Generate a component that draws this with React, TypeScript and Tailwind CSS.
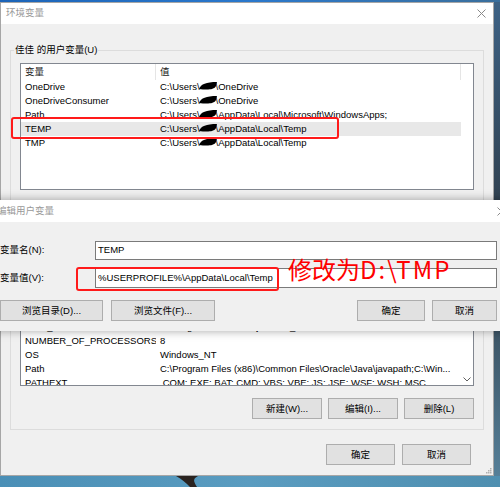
import React from "react";

type Row = { name: string; value: React.ReactNode; selected?: boolean };

function Blob() {
  return (
    <svg width="20" height="10" viewBox="0 0 20 10" className="inline-block -mx-[2px] align-[-1px]">
      <path d="M1 8 C3 3 8 1 19 1 L18 5 C16 9 9 9 1 8 Z" fill="#000" />
    </svg>
  );
}

const home = (rest: string) => (
  <>
    {"C:\\Users\\"}
    <Blob />
    {rest}
  </>
);

const userVars: Row[] = [
  { name: "OneDrive", value: home("\\OneDrive") },
  { name: "OneDriveConsumer", value: home("\\OneDrive") },
  { name: "Path", value: home("\\AppData\\Local\\Microsoft\\WindowsApps;") },
  { name: "TEMP", value: home("\\AppData\\Local\\Temp"), selected: true },
  { name: "TMP", value: home("\\AppData\\Local\\Temp") },
];

const sysVars: Row[] = [
  { name: "ComSpec", value: "C:\\Windows\\system32\\cmd.exe" },
  { name: "configsetroot", value: "C:\\Windows\\ConfigSetRoot" },
  { name: "DriverData", value: "C:\\Windows\\System32\\Drivers\\DriverData" },
  { name: "JAVA_HOME", value: "C:\\Program Files\\Java\\jdk1.8.0_201" },
  { name: "NUMBER_OF_PROCESSORS", value: "8" },
  { name: "OS", value: "Windows_NT" },
  { name: "Path", value: "C:\\Program Files (x86)\\Common Files\\Oracle\\Java\\javapath;C:\\Win..." },
  { name: "PATHEXT", value: ".COM;.EXE;.BAT;.CMD;.VBS;.VBE;.JS;.JSE;.WSF;.WSH;.MSC" },
];

function CloseIcon() {
  return (
    <svg width="9" height="9" viewBox="0 0 9 9">
      <path d="M0.5 0.5 L8.5 8.5 M8.5 0.5 L0.5 8.5" stroke="#8a8a8a" strokeWidth="1" />
    </svg>
  );
}

function Btn({ children, className }: { children: React.ReactNode; className: string }) {
  return (
    <button
      className={`flex h-[21px] items-center justify-center border border-[#adadad] bg-[#e1e1e1] text-[9.5px] leading-[12px] text-black ${className}`}
    >
      {children}
    </button>
  );
}

function VarList({ rows, scroll, height }: { rows: Row[]; scroll?: boolean; height: string }) {
  return (
    <div className={`flex overflow-hidden border border-[#828790] bg-white ${height}`}>
      <div className="flex w-[440px] flex-col">
        <div className="flex h-[16px] shrink-0 items-center text-[#1a1a1a]">
          <div className="flex h-full w-[135px] shrink-0 items-center border-r border-[#e5e5e5] pl-[4px]">变量</div>
          <div className="flex h-full flex-1 items-center border-r border-[#e5e5e5] pl-[4px]">值</div>
        </div>
        {rows.map((r) => (
          <div
            key={r.name + String(r.value)}
            className={`flex h-[14px] shrink-0 items-center whitespace-nowrap ${r.selected ? "bg-[#e8e8e8]" : ""}`}
          >
            <div className="w-[135px] shrink-0 overflow-hidden pl-[4px]">{r.name}</div>
            <div className="min-w-0 flex-1 overflow-hidden pl-[4px]">{r.value}</div>
          </div>
        ))}
      </div>
      <div className="flex flex-1 flex-col items-center justify-end pb-[3px]">
        {scroll && (
          <svg width="8" height="5" viewBox="0 0 8 5">
            <path d="M0.5 0.5 L4 4 L7.5 0.5" fill="none" stroke="#606060" strokeWidth="1" />
          </svg>
        )}
      </div>
    </div>
  );
}

function Group({ title, children, className }: { title: string; children: React.ReactNode; className: string }) {
  return (
    <fieldset className={`border border-[#dcdcdc] ${className}`}>
      <legend className="ml-[3px] px-[1px] leading-[14px] text-black">{title}</legend>
      <div className="flex flex-col px-[9px] pb-[10px] pt-[6px]">{children}</div>
    </fieldset>
  );
}

function EditDialog() {
  return (
    <div className="absolute left-[-9px] top-[200px] flex h-[131px] w-[534px] flex-col bg-[#f0f0f0] shadow-[0_0_9px_rgba(0,0,0,0.35)]">
      <div className="flex h-[22px] items-center justify-between bg-white pl-[6px] pr-[19px]">
        <span className="text-[#999999]">编辑用户变量</span>
        <CloseIcon />
      </div>
      <div className="flex w-[506px] flex-col pl-[9px] pt-[19px]">
        <div className="flex h-[19px] items-center">
          <span className="w-[95px] shrink-0">变量名(N):</span>
          <div className="flex h-full flex-1 items-center border border-[#7a7a7a] bg-white pl-[2px]">TEMP</div>
        </div>
        <div className="mt-[8px] flex h-[20px] items-center">
          <span className="w-[95px] shrink-0">变量值(V):</span>
          <div className="flex h-full flex-1 items-center border border-[#7a7a7a] bg-white pl-[2px]">
            %USERPROFILE%\AppData\Local\Temp
          </div>
        </div>
        <div className="mt-[12px] flex">
          <Btn className="w-[103px]">浏览目录(D)...</Btn>
          <Btn className="ml-[8px] w-[104px]">浏览文件(F)...</Btn>
          <Btn className="ml-auto w-[68px]">确定</Btn>
          <Btn className="ml-[7px] w-[65px]">取消</Btn>
        </div>
      </div>
    </div>
  );
}

export default function App() {
  return (
    <div className="relative flex h-[487px] w-[500px] flex-col overflow-hidden bg-[#4f93b8] font-['Liberation_Sans','Noto_Sans_CJK_SC',sans-serif] text-[9.5px] text-black">
      <div className="h-[2px] shrink-0 bg-gradient-to-r from-[#1c64b8] via-[#2a78cc] to-[#3a6f9c]" />
      <div className="flex shrink-0">
        <div className="flex h-[474px] w-[494px] flex-col border border-[#a6a6a6] bg-[#f0f0f0]">
          <div className="flex h-[21px] shrink-0 items-center justify-between bg-white pl-[5px] pr-[7px]">
            <span className="text-[#999999]">环境变量</span>
            <CloseIcon />
          </div>
          <div className="flex flex-col px-[9px]">
            <Group title="佳佳 的用户变量(U)" className="mt-[19px]">
              <VarList rows={userVars} height="h-[127px]" />
              <div className="mt-[11px] flex justify-end gap-[6px]">
                <Btn className="w-[70px]">新建(N)...</Btn>
                <Btn className="w-[70px]">编辑(E)...</Btn>
                <Btn className="w-[70px]">删除(D)</Btn>
              </div>
            </Group>
            <Group title="系统变量(S)" className="mt-[8px]">
              <VarList rows={sysVars} scroll height="h-[125px]" />
              <div className="mt-[12px] flex justify-end gap-[6px]">
                <Btn className="w-[70px]">新建(W)...</Btn>
                <Btn className="w-[70px]">编辑(I)...</Btn>
                <Btn className="w-[70px]">删除(L)</Btn>
              </div>
            </Group>
            <div className="mt-[14px] flex justify-end gap-[7px] pr-[13px]">
              <Btn className="w-[69px]">确定</Btn>
              <Btn className="w-[69px]">取消</Btn>
            </div>
          </div>
          <div className="mt-auto flex justify-end pb-[1px] pr-[1px]">
            <svg width="6" height="6" viewBox="0 0 6 6">
              <g fill="#b0b0b0">
                <rect x="4" y="0" width="1.5" height="1.5" />
                <rect x="2" y="2" width="1.5" height="1.5" />
                <rect x="4" y="2" width="1.5" height="1.5" />
                <rect x="0" y="4" width="1.5" height="1.5" />
                <rect x="2" y="4" width="1.5" height="1.5" />
                <rect x="4" y="4" width="1.5" height="1.5" />
              </g>
            </svg>
          </div>
        </div>
        <div className="flex-1 bg-gradient-to-b from-[#3d6285] via-[#2e3c48] to-[#557f98]" />
      </div>
      <div className="flex-1 bg-gradient-to-r from-[#4a8fb6] via-[#5a9cc0] to-[#4f8fb0]">
        <svg width="500" height="11" viewBox="0 0 500 11">
          <path d="M176 0 C182 3 186 7 190 11 L197 11 C194 6 192 3 198 0 Z" fill="#2a2320" />
        </svg>
      </div>

      <EditDialog />

      <div className="absolute left-[11px] top-[117px] h-[22px] w-[328px] rounded-[3px] border-2 border-[#ff1a1a]" />
      <div className="absolute left-[76px] top-[267px] h-[24px] w-[203px] rounded-[3px] border-2 border-[#ff1a1a]" />
      <span className="absolute left-[288px] top-[254px] whitespace-nowrap font-['Noto_Sans_CJK_SC',sans-serif] text-[24px] leading-[30px] text-[#ff0000]">
        修改为<span className="tracking-[2px]">D:\TMP</span>
      </span>
    </div>
  );
}
